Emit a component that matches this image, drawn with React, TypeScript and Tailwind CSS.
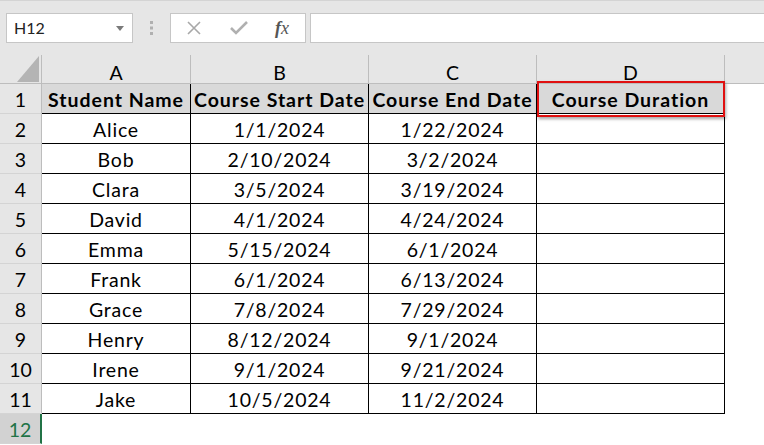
import React from "react";

const rows = [
  ["Alice", "1/1/2024", "1/22/2024"],
  ["Bob", "2/10/2024", "3/2/2024"],
  ["Clara", "3/5/2024", "3/19/2024"],
  ["David", "4/1/2024", "4/24/2024"],
  ["Emma", "5/15/2024", "6/1/2024"],
  ["Frank", "6/1/2024", "6/13/2024"],
  ["Grace", "7/8/2024", "7/29/2024"],
  ["Henry", "8/12/2024", "9/1/2024"],
  ["Irene", "9/1/2024", "9/21/2024"],
  ["Jake", "10/5/2024", "11/2/2024"],
];

const cols = "grid-cols-[42px_149px_178px_168px_188px_1fr]";

function RowHead({ n, selected }: { n: number; selected?: boolean }) {
  return (
    <div
      className={
        "h-[30px] flex items-center justify-center pt-[3px] border-b border-[#d4d4d4] " +
        (selected
          ? "bg-[#d2d2d2] text-[#217346] border-r-2 border-r-[#217346]"
          : "bg-[#e6e6e6] text-black border-r border-r-[#bdbdbd]")
      }
    >
      {n}
    </div>
  );
}

export default function App() {
  return (
    <div
      className="w-[764px] h-[445px] overflow-hidden bg-white text-[19.5px] text-black"
      style={{ fontFamily: "Lato, 'Noto Sans', sans-serif" }}
    >
      {/* formula bar */}
      <div className="h-[55px] bg-[#e6e6e6] border-t border-[#d4d4d4] flex items-start pt-[12px] pl-[6px]">
        <div className="w-[127px] h-[30px] bg-white border border-[#c6c6c6] flex items-center justify-between pl-[7px] pr-[8px] text-[16px] text-[#222]">
          <span>H12</span>
          <svg width="8" height="5" viewBox="0 0 8 5">
            <path d="M0 0h8L4 5z" fill="#7a7a7a" />
          </svg>
        </div>
        <div className="w-[37px] h-[30px] flex items-center justify-center">
          <svg width="4" height="14" viewBox="0 0 4 14">
            <rect x="0" y="0" width="3" height="3" fill="#b0b0b0" />
            <rect x="0" y="5.5" width="3" height="3" fill="#b0b0b0" />
            <rect x="0" y="11" width="3" height="3" fill="#b0b0b0" />
          </svg>
        </div>
        <div className="w-[136px] h-[30px] bg-white border border-[#c6c6c6] flex items-center pl-[16px]">
          <svg width="14" height="14" viewBox="0 0 14 14">
            <path d="M1 1L13 13M13 1L1 13" stroke="#a8a8a8" strokeWidth="1.6" />
          </svg>
          <svg className="ml-[29px]" width="18" height="14" viewBox="0 0 18 14">
            <path d="M1 7l5 5L17 1" stroke="#b0b0b0" strokeWidth="2.6" fill="none" />
          </svg>
          <span
            className="ml-[27px] text-[18px] italic text-[#555]"
            style={{ fontFamily: "'Liberation Serif', serif" }}
          >
            <span className="font-bold">f</span>x
          </span>
        </div>
        <div className="flex-1 ml-[4px] h-[30px] bg-white border border-[#c6c6c6] border-r-0" />
      </div>

      {/* column headers */}
      <div className={"grid h-[29px] bg-[#e6e6e6] border-b border-[#bdbdbd] " + cols}>
        <div className="relative border-r border-[#bdbdbd]">
          <svg className="absolute left-[17px] top-[1px]" width="22" height="26" viewBox="0 0 22 26">
            <path d="M22 0V26H0z" fill="#b4b4b4" />
          </svg>
        </div>
        {["A", "B", "C", "D"].map((c) => (
          <div key={c} className="flex items-center justify-center pt-[3px] border-r border-[#bdbdbd]">
            {c}
          </div>
        ))}
        <div />
      </div>

      {/* body */}
      <div className={"grid " + cols}>
        <RowHead n={1} />
        {["Student Name", "Course Start Date", "Course End Date"].map((h) => (
          <div
            key={h}
            className="h-[30px] flex items-center justify-center pt-[3px] bg-[#d9d9d9] font-bold tracking-[0.05em] border-r border-b border-black whitespace-nowrap"
          >
            {h}
          </div>
        ))}
        <div className="relative h-[30px] flex items-center justify-center pt-[3px] bg-[#d9d9d9] font-bold tracking-[0.05em] border-r border-b border-black">
          Course Duration
          <div className="absolute left-0 right-[-1px] top-[-3px] bottom-[-4px] border-2 border-[#e01010] shadow-[1px_2px_3px_rgba(0,0,0,0.35)]" />
        </div>
        <div className="h-[30px]" />

        {rows.map((r, i) => (
          <React.Fragment key={i}>
            <RowHead n={i + 2} />
            {r.map((v, j) => (
              <div
                key={j}
                className="h-[30px] flex items-center justify-center pt-[3px] tracking-[0.04em] border-r border-b border-black"
              >
                {v}
              </div>
            ))}
            <div className="h-[30px] border-r border-b border-black" />
            <div className="h-[30px]" />
          </React.Fragment>
        ))}

        <RowHead n={12} selected />
        <div className="h-[30px] col-span-5" />
      </div>
    </div>
  );
}
